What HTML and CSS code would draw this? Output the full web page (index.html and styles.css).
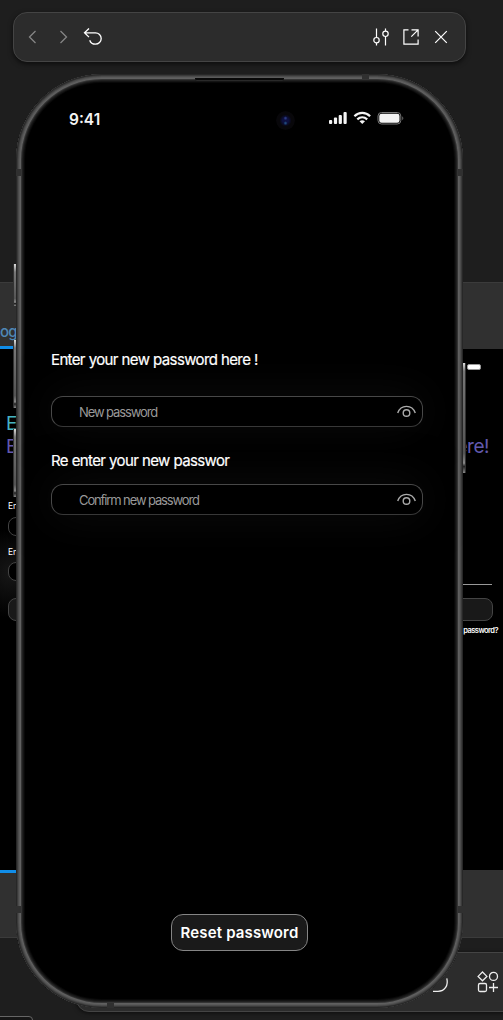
FILE: index.html
```html
<!DOCTYPE html>
<html lang="en">
<head>
<meta charset="utf-8">
<title>Prototype preview</title>
<link rel="stylesheet" href="styles.css">
</head>
<body>
<main class="desktop">
  <section class="backdrop">
    <div class="section-band"></div>
    <div class="artboards"></div>
    <span class="frame-name">og</span>
    <i class="selection selection-top"></i><i class="selection selection-bottom"></i>
    <span class="peek hello">E</span>
    <span class="peek enter">E</span>
    <span class="peek label-one">En</span>
    <span class="peek label-two">En</span>
    <i class="mini mini-one"></i><i class="mini mini-two"></i><i class="mini mini-three"></i>
    <i class="mini-battery"></i>
    <span class="peek here">ere!</span>
    <i class="divider"></i><i class="mini mini-right"></i>
    <span class="peek forgot">password?</span>
    <div class="dock"></div>
    <svg class="dock-icons" width="80" height="30" viewBox="0 0 80 30" fill="none" stroke="#eee" stroke-width="1.3">
      <path d="M13 21.300h5c7 0 10.500-6 8.800-13"/>
      <path d="M62.500 2l4.400 4.400-4.400 4.400-4.400-4.400z"/><circle cx="73.500" cy="6.400" r="4"/><rect x="58.500" y="13.500" width="8" height="8" rx="1.500"/><path d="M73.500 13v9M69 17.500h9"/>
    </svg>
    <div class="corner-panel"></div>
  </section>

  <header class="toolbar">
    <svg width="90" height="30" viewBox="0 0 90 30" fill="none" stroke-width="1.3">
      <path stroke="#858585" d="M12.500 9l-6 6 6 6M37.500 9l6 6-6 6"/>
      <path stroke="#fff" d="M66 6.500l-4.500 4.300 4.500 4.300M61.500 10.800h11a5.700 5.700 0 0 1 0 11.400c-3 0-5-1.500-5.800-4"/>
    </svg>
    <svg width="90" height="30" viewBox="0 0 90 30" fill="none" stroke="#fff" stroke-width="1.2">
      <path d="M10.500 6.500v9M10.500 21v2.500M19.500 6.500v2.500M19.500 14.500v9"/><circle cx="10.500" cy="18.200" r="2.700"/><circle cx="19.500" cy="11.800" r="2.700"/>
      <path d="M42.500 7.900h-4.600v14.200h14.200v-4.600M45.500 7.900h6.600v6.600M52.100 7.900l-6.800 6.800"/>
      <path d="M69.200 9.200l11.600 11.600M80.800 9.200L69.200 20.800"/>
    </svg>
  </header>

  <i class="side-button action"></i><i class="side-button volume-up"></i><i class="side-button volume-down"></i><i class="side-button power"></i>

  <section class="phone">
    <i class="seam seam-top"></i><i class="seam seam-bottom"></i>
    <i class="seam seam-left"></i><i class="seam seam-left low"></i><i class="seam seam-right"></i><i class="seam seam-right low"></i>
    <i class="speaker"></i>
    <i class="camera"></i>
    <div class="screen">
      <div class="status">
        <span class="time">9:41</span>
        <svg width="78" height="16" viewBox="0 0 78 16">
          <g fill="#f4f4f4"><rect x="1" y="10" width="3.200" height="4" rx="1"/><rect x="5.900" y="7.500" width="3.200" height="6.500" rx="1"/><rect x="10.700" y="5" width="3.200" height="9" rx="1"/><rect x="15.500" y="2" width="3.200" height="12" rx="1"/></g>
          <path fill="none" stroke="#f4f4f4" stroke-width="2.200" d="M26.400 6.300c4.500-4.500 11.200-4.500 15.700 0M29.300 9.400c3-2.800 6.900-2.800 9.900 0"/>
          <path fill="#f4f4f4" d="M31.500 11.300q2.750-2.300 5.500 0L34.250 14z"/>
          <rect x="50" y="2.500" width="22.800" height="11.500" rx="3.500" fill="none" stroke="#777"/>
          <rect x="51.300" y="3.800" width="20.200" height="8.900" rx="2.300" fill="#f4f4f4"/>
          <path d="M74.300 6.300q2 2 0 4z" fill="#777"/>
        </svg>
      </div>
      <form class="form">
        <label class="caption caption-new">Enter your new password here !</label>
        <div class="field">
          <span class="hint hint-new">New password</span>
          <svg class="eye" width="20" height="14" viewBox="0 0 20 14" fill="none" stroke="#aaa" stroke-width="1.400"><path d="M1.700 8C4.800-.8 16.200-.8 19.300 8"/><circle cx="10.500" cy="8" r="3.300"/></svg>
        </div>
        <label class="caption caption-again">Re enter your new passwor</label>
        <div class="field">
          <span class="hint hint-again">Confirm new password</span>
          <svg class="eye" width="20" height="14" viewBox="0 0 20 14" fill="none" stroke="#aaa" stroke-width="1.400"><path d="M1.700 8C4.800-.8 16.200-.8 19.300 8"/><circle cx="10.500" cy="8" r="3.300"/></svg>
        </div>
      </form>
      <div class="reset"><span>Reset password</span></div>
    </div>
  </section>
</main>
</body>
</html>
```

FILE: styles.css
```css
* { box-sizing: border-box; }
body { margin: 0; background: #1e1e1e; font-family: Inter, "Liberation Sans", sans-serif; color: #fff; }
.desktop { position: relative; width: 503px; height: 1020px; overflow: hidden; padding: 12px 0 0 13px; }
.backdrop { position: absolute; inset: 0; }
.backdrop > * { position: absolute; white-space: nowrap; }
.section-band { left: -2px; top: 282px; width: 507px; height: 656px; background: #303030; border: 1px solid #3b3b3b; }
.artboards { left: 0; top: 349px; width: 503px; height: 521px; background: radial-gradient(circle at 12px 224px, #171717, #000 45px); }
.frame-name { left: 0; top: 323px; font-size: 15px; line-height: 18px; letter-spacing: -0.800px; color: #4f87b5; font-weight: 500; }
.selection { left: 0; width: 17px; height: 3px; background: #108de8; }
.selection-top { top: 346px; }
.selection-bottom { top: 870px; }
.hello { left: 6px; top: 412px; font-size: 19px; line-height: 23px; color: #48b5c4; }
.enter { left: 6px; top: 435px; font-size: 19px; line-height: 23px; color: #6259ae; }
.label-one, .label-two { left: 8px; font-size: 8.500px; line-height: 10px; }
.label-one { top: 501px; }
.label-two { top: 547px; }
.mini { left: 8px; width: 100px; height: 19px; border: 1px solid #444; border-radius: 8px; background: #000; }
.mini-one { top: 517px; }
.mini-two { top: 562px; }
.mini-three { top: 598px; height: 23px; background: #191919; }
.mini-right { left: 400px; width: 93px; top: 598px; height: 23px; background: #191919; }
.mini-battery { left: 467px; top: 364px; width: 14px; height: 6px; border: 1px solid #999; border-radius: 2px; background: #fff; }
.here { right: 14px; top: 435px; font-size: 19px; line-height: 23px; letter-spacing: -0.500px; color: #6259ae; }
.divider { left: 440px; top: 584px; width: 52px; height: 1px; background: #999; }
.forgot { right: 5px; top: 626px; font-size: 7.500px; line-height: 10px; font-weight: 600; letter-spacing: -0.550px; }
.dock { left: 76px; top: 952px; width: 460px; height: 60px; border: 1px solid #444; border-radius: 13px; background: #2c2c2c; box-shadow: 0 1px 4px #0009; }
.dock-icons { left: 420px; top: 970px; }
.corner-panel { left: -10px; top: 1016px; width: 43px; height: 20px; border: 1px solid #666; border-radius: 4px; background: #161616; }

.toolbar { position: relative; display: flex; justify-content: space-between; align-items: center; width: 453px; height: 50px; padding: 0 9px; border: 1px solid #444; border-radius: 14px; background: #2c2c2c; box-shadow: 0 2px 5px #0009; }

.side-button { position: absolute; left: 13px; width: 4px; border: solid #333; border-width: 0 1px; background: linear-gradient(#ddd, #777 8px, #555 82%, #888 91%, #222 94%, #888); }
.action { top: 264px; height: 42px; }
.volume-up { top: 340px; height: 68px; }
.volume-down { top: 429px; height: 68px; }
.power { left: 462px; top: 363px; height: 110px; }

.phone { position: absolute; left: 16px; top: 74px; width: 447px; height: 934px; border-radius: 86px; background: #000; box-shadow: inset 0 0 0 1px #272727, inset 0 0 0 2px #3a3a3a, inset 0 0 0 3px #4c4c4c, inset 0 0 0 4px #5a5a5a, inset 0 0 0 5px #606060, inset 0 0 0 6px #343434, inset 0 0 0 7px #202020, inset 0 0 0 8px #141414, inset 0 0 0 9px #080808; }
.seam { position: absolute; background: #303030; }
.seam-top, .seam-bottom { width: 7px; height: 5px; }
.seam-top { top: 0; left: 346px; }
.seam-bottom { bottom: 0; left: 91px; }
.seam-left, .seam-right { width: 5px; height: 7px; top: 95px; }
.seam-left { left: 0; }
.seam-right { right: 0; }
.seam.low { top: 832px; }
.speaker { position: absolute; left: 179px; top: 4px; width: 89px; height: 3px; background: #080808; border-bottom: 1px solid #292929; border-radius: 0 0 2px 2px; }
.camera { position: absolute; left: 260px; top: 37px; width: 19px; height: 19px; border-radius: 50%; background: radial-gradient(circle at 50% 38%, #2c3a82 0 0.500px, transparent 2px), radial-gradient(circle at 50% 64%, #204a7c 0 0.500px, transparent 2px), radial-gradient(circle, #0d1040 0 3px, #08070a 6px 9px, #000 10px); }
.screen { position: relative; display: flex; flex-direction: column; height: 100%; padding: 35px 40px 57px 35px; }
.status { display: flex; justify-content: space-between; align-items: flex-start; height: 20px; padding: 0 17px 0 18px; }
.time { padding-top: 1px; font-size: 15.500px; line-height: 20px; font-weight: 600; letter-spacing: 0; color: #f4f4f4; }
.status svg { margin: 1px 0 0; }
.form { display: flex; flex-direction: column; width: 372px; margin-top: 221px; }
.caption { position: relative; z-index: 1; font-size: 15px; line-height: 20px; letter-spacing: -0.630px; word-spacing: 0.200px; -webkit-text-stroke: 0.200px #fff; white-space: nowrap; }
.caption-new { margin-bottom: 26px; }
.caption-again { margin: 24px 0 13px; }
.field { display: flex; justify-content: space-between; align-items: center; height: 31px; padding: 0 6px 0 27px; border: 1px solid #484848; border-bottom-color: #383838; border-radius: 12px; background: #000; box-shadow: 0 0 45px #1b1b1b80; }
.hint { font-size: 13px; line-height: 18px; color: #999; }
.hint-new { letter-spacing: -1.100px; }
.hint-again { letter-spacing: -1.120px; }
.reset { display: flex; justify-content: center; align-items: center; width: 137px; height: 37px; margin: auto 0 0 120px; border: 1px solid #858585; border-radius: 12px; background: #1a1a1a; font-size: 15px; font-weight: 600; letter-spacing: 0.150px; white-space: nowrap; }
```
